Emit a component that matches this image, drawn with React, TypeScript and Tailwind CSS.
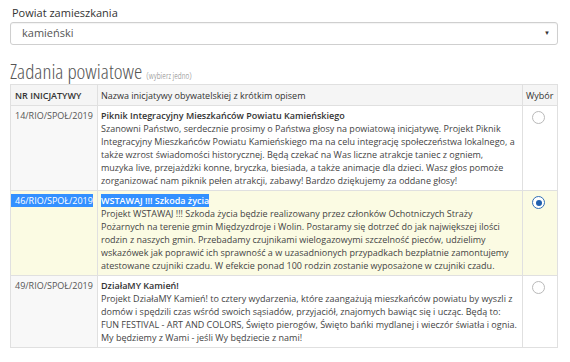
import React, { useState } from "react"

type Row = {
  nr: string
  title: string
  lines: string[]
}

const rows: Row[] = [
  {
    nr: "14/RIO/SPOŁ/2019",
    title: "Piknik Integracyjny Mieszkańców Powiatu Kamieńskiego",
    lines: [
      "Szanowni Państwo, serdecznie prosimy o Państwa głosy na powiatową inicjatywę. Projekt Piknik",
      "Integracyjny Mieszkańców Powiatu Kamieńskiego ma na celu integrację społeczeństwa lokalnego, a",
      "także wzrost świadomości historycznej. Będą czekać na Was liczne atrakcje taniec z ogniem,",
      "muzyka live, przejażdżki konne, bryczka, biesiada, a także animacje dla dzieci. Wasz głos pomoże",
      "zorganizować nam piknik pełen atrakcji, zabawy! Bardzo dziękujemy za oddane głosy!",
    ],
  },
  {
    nr: "46/RIO/SPOŁ/2019",
    title: "WSTAWAJ !!! Szkoda życia",
    lines: [
      "Projekt WSTAWAJ !!! Szkoda życia będzie realizowany przez członków Ochotniczych Straży",
      "Pożarnych na terenie gmin Międzyzdroje i Wolin. Postaramy się dotrzeć do jak największej ilości",
      "rodzin z naszych gmin. Przebadamy czujnikami wielogazowymi szczelność pieców, udzielimy",
      "wskazówek jak poprawić ich sprawność a w uzasadnionych przypadkach bezpłatnie zamontujemy",
      "atestowane czujniki czadu. W efekcie ponad 100 rodzin zostanie wyposażone w czujniki czadu.",
    ],
  },
  {
    nr: "49/RIO/SPOŁ/2019",
    title: "DziałaMY Kamień!",
    lines: [
      "Projekt DziałaMY Kamień! to cztery wydarzenia, które zaangażują mieszkańców powiatu by wyszli z",
      "domów i spędzili czas wśród swoich sąsiadów, przyjaciół, znajomych bawiąc się i ucząc. Będą to:",
      "FUN FESTIVAL - ART AND COLORS, Święto pierogów, Święto bańki mydlanej i wieczór światła i ognia.",
      "My będziemy z Wami - jeśli Wy będziecie z nami!",
    ],
  },
]

function Radio({ checked, onClick }: { checked: boolean; onClick: () => void }) {
  return (
    <button
      type="button"
      onClick={onClick}
      className={
        checked
          ? "flex h-[13px] w-[13px] items-center justify-center rounded-full border border-[#2f6db5] bg-white"
          : "flex h-[13px] w-[13px] items-center justify-center rounded-full border border-[#b9b9b9] bg-white"
      }
    >
      {checked && <span className="h-[6px] w-[6px] rounded-full bg-[#1f5fae]" />}
    </button>
  )
}

export default function App() {
  const [picked, setPicked] = useState(1)

  return (
    <div className="h-[362px] w-[570px] overflow-hidden bg-white font-['Open_Sans',sans-serif] text-[#333]">
      <div className="flex flex-col px-[10px] pt-[5px]">
        <label className="pl-[2px] text-[11px] font-medium leading-[15px] text-[#333]">
          Powiat zamieszkania
        </label>
        <div className="mt-[2px] flex h-[23px] w-[548px] items-center justify-between rounded-[3px] border border-[#cfcfcf] pl-[11px] pr-[7px] shadow-[inset_0_1px_1px_rgba(0,0,0,0.05)]">
          <span className="text-[11px] text-[#555]">kamieński</span>
          <span className="text-[6px] text-[#333]">▼</span>
        </div>

        <h2 className="mt-[14px] flex items-baseline gap-[4px] font-light text-[#555] [font-stretch:85%]">
          <span className="text-[21px] leading-[24px]">Zadania powiatowe</span>
          <span className="text-[9px] text-[#888]">(wybierz jedno)</span>
        </h2>

        <table className="mt-[1px] w-[548px] table-fixed border-collapse text-[9px] leading-[13px]">
          <colgroup>
            <col className="w-[87px]" />
            <col />
            <col className="w-[35px]" />
          </colgroup>
          <thead>
            <tr className="bg-[#f5f5f5] text-[#333]">
              <th className="h-[21px] border border-[#e0e0e0] px-[4px] text-left font-semibold">
                NR INICJATYWY
              </th>
              <th className="border border-[#e0e0e0] px-[3px] text-left font-normal">
                Nazwa inicjatywy obywatelskiej z krótkim opisem
              </th>
              <th className="border border-[#e0e0e0] px-[3px] text-left font-normal">Wybór</th>
            </tr>
          </thead>
          <tbody>
            {rows.map((row, i) => {
              const sel = picked === i
              return (
                <tr key={row.nr} className={sel ? "bg-[#fbfbe3]" : "bg-white"}>
                  <td
                    className={
                      sel
                        ? "whitespace-nowrap border border-[#e0e0e0] px-[4px] py-[3px] align-top"
                        : "whitespace-nowrap border border-[#e0e0e0] bg-[#f8f8f8] px-[4px] py-[3px] align-top text-[#555]"
                    }
                  >
                    {sel ? (
                      <span className="-ml-[4px] bg-[#3390ff] pl-[4px] text-white">{row.nr}</span>
                    ) : (
                      row.nr
                    )}
                  </td>
                  <td className="whitespace-nowrap border border-[#e0e0e0] px-[3px] py-[3px] align-top text-[#444]">
                    <div className="font-semibold text-[#333]">
                      {sel ? <span className="bg-[#3390ff] text-white">{row.title}</span> : row.title}
                    </div>
                    {row.lines.map(l => (
                      <div key={l}>{l}</div>
                    ))}
                  </td>
                  <td className="border border-[#e0e0e0] px-[9px] py-[5px] align-top">
                    <Radio checked={sel} onClick={() => setPicked(i)} />
                  </td>
                </tr>
              )
            })}
          </tbody>
        </table>
      </div>
    </div>
  )
}
